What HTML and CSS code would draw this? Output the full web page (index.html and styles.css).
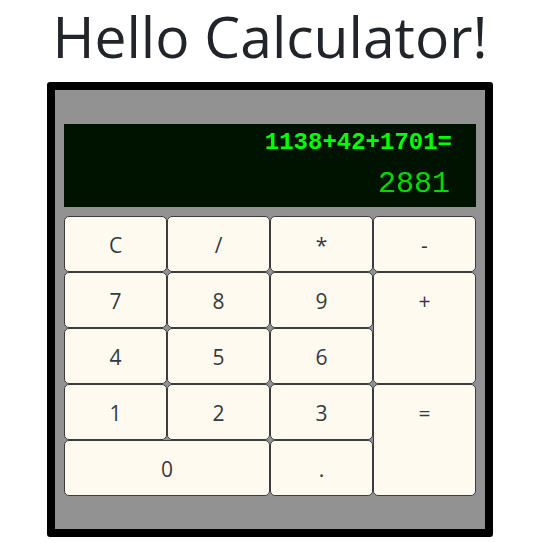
FILE: index.html
```html
<!DOCTYPE html>
<html>
<head>
<meta charset="utf-8">
<link rel="stylesheet" href="styles.css">
</head>
<body>
<h1 class="title">Hello Calculator!</h1>
<div class="calc">
  <div class="screen">
    <div class="equation">1138+42+1701=</div>
    <div class="result">2881</div>
  </div>
  <div class="keys">
    <div class="key">C</div>
    <div class="key">/</div>
    <div class="key">*</div>
    <div class="key">-</div>
    <div class="key">7</div>
    <div class="key">8</div>
    <div class="key">9</div>
    <div class="key tall">+</div>
    <div class="key">4</div>
    <div class="key">5</div>
    <div class="key">6</div>
    <div class="key">1</div>
    <div class="key">2</div>
    <div class="key">3</div>
    <div class="key tall">=</div>
    <div class="key wide">0</div>
    <div class="key">.</div>
  </div>
</div>
</body>
</html>
```
FILE: styles.css
```css
html, body {
  margin: 0;
  padding: 0;
  background: #ffffff;
}
body {
  font-family: "Open Sans", "Noto Sans", sans-serif;
  color: #212529;
  padding-right: 3px;
}
.title {
  margin: 0 0 10px 0;
  font-size: 57px;
  line-height: 72px;
  font-weight: 400;
  text-align: center;
  color: #212529;
}
.calc {
  box-sizing: border-box;
  width: 446px;
  height: 455px;
  margin: 0 auto;
  border: 8px solid #000;
  border-radius: 3px;
  background: #929292;
  padding: 34px 9px 0 9px;
}
.screen {
  box-sizing: border-box;
  height: 83px;
  background: #001200;
  padding: 4px 24px 0 0;
  text-align: right;
  font-family: "Liberation Mono", "Courier New", monospace;
}
.equation {
  font-size: 24px;
  line-height: 30px;
  font-weight: 700;
  color: #00ff00;
}
.result {
  margin-top: 8px;
  font-size: 30px;
  line-height: 36px;
  color: #00d800;
  padding-right: 2px;
}
.keys {
  margin-top: 9px;
  display: grid;
  grid-template-columns: repeat(4, 103px);
  grid-auto-rows: 56px;
}
.key {
  box-sizing: border-box;
  background: #fffaf0;
  border: 1px solid #3a3c40;
  border-radius: 5px;
  text-align: center;
  font-size: 21px;
  line-height: 32px;
  padding-top: 12px;
  color: #343a40;
}
.tall {
  grid-row: span 2;
}
.wide {
  grid-column: span 2;
}
```
